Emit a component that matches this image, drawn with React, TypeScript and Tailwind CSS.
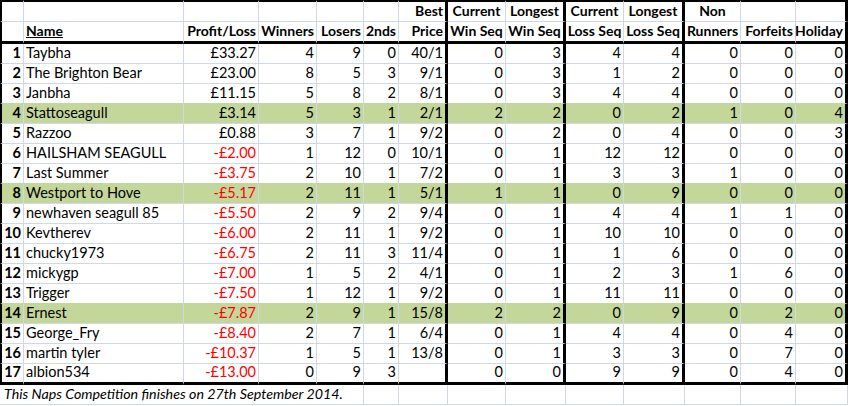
import React from 'react';

type Row = {
  name: string;
  pl: string;
  vals: (string | number)[];
  green?: boolean;
};

const rows: Row[] = [
  { name: 'Taybha', pl: '£33.27', vals: [4, 9, 0, '40/1', 0, 3, 4, 4, 0, 0, 0] },
  { name: 'The Brighton Bear', pl: '£23.00', vals: [8, 5, 3, '9/1', 0, 3, 1, 2, 0, 0, 0] },
  { name: 'Janbha', pl: '£11.15', vals: [5, 8, 2, '8/1', 0, 3, 4, 4, 0, 0, 0] },
  { name: 'Stattoseagull', pl: '£3.14', vals: [5, 3, 1, '2/1', 2, 2, 0, 2, 1, 0, 4], green: true },
  { name: 'Razzoo', pl: '£0.88', vals: [3, 7, 1, '9/2', 0, 2, 0, 4, 0, 0, 3] },
  { name: 'HAILSHAM SEAGULL', pl: '-£2.00', vals: [1, 12, 0, '10/1', 0, 1, 12, 12, 0, 0, 0] },
  { name: 'Last Summer', pl: '-£3.75', vals: [2, 10, 1, '7/2', 0, 1, 3, 3, 1, 0, 0] },
  { name: 'Westport to Hove', pl: '-£5.17', vals: [2, 11, 1, '5/1', 1, 1, 0, 9, 0, 0, 0], green: true },
  { name: 'newhaven seagull 85', pl: '-£5.50', vals: [2, 9, 2, '9/4', 0, 1, 4, 4, 1, 1, 0] },
  { name: 'Kevtherev', pl: '-£6.00', vals: [2, 11, 1, '9/2', 0, 1, 10, 10, 0, 0, 0] },
  { name: 'chucky1973', pl: '-£6.75', vals: [2, 11, 3, '11/4', 0, 1, 1, 6, 0, 0, 0] },
  { name: 'mickygp', pl: '-£7.00', vals: [1, 5, 2, '4/1', 0, 1, 2, 3, 1, 6, 0] },
  { name: 'Trigger', pl: '-£7.50', vals: [1, 12, 1, '9/2', 0, 1, 11, 11, 0, 0, 0] },
  { name: 'Ernest', pl: '-£7.87', vals: [2, 9, 1, '15/8', 2, 2, 0, 9, 0, 2, 0], green: true },
  { name: 'George_Fry', pl: '-£8.40', vals: [2, 7, 1, '6/4', 0, 1, 4, 4, 0, 4, 0] },
  { name: 'martin tyler', pl: '-£10.37', vals: [1, 5, 1, '13/8', 0, 1, 3, 3, 0, 7, 0] },
  { name: 'albion534', pl: '-£13.00', vals: [0, 9, 3, '', 0, 0, 9, 9, 0, 4, 0] },
];

// column index -> thick right border
const thick = [false, false, false, false, false, false, true, false, true, false, true, false, false, true];

type CellProps = {
  col: number;
  children?: React.ReactNode;
  align?: 'left' | 'right' | 'center';
  green?: boolean;
  greenBelow?: boolean;
  top?: boolean;
  heavyBottom?: boolean;
  bold?: boolean;
  red?: boolean;
};

function Cell({ col, children, align = 'right', green, greenBelow, top, heavyBottom, bold, red }: CellProps) {
  return (
    <div
      className={[
        'flex items-end overflow-visible whitespace-nowrap border-r border-b border-[#d0d7e5] pb-[1px] leading-[18px]',
        align === 'left' ? 'justify-start px-[2px]' : align === 'center' ? 'justify-center px-0' : 'justify-end px-[2px]',
        green ? 'bg-[#c4d79b] border-[#c4d79b]' : 'bg-white',
        greenBelow ? 'border-b-[#c4d79b]' : '',
        thick[col] ? 'border-r-[3px] border-r-black' : '',
        col === 0 ? 'border-l-2 border-l-black' : '',
        top ? 'border-t-2 border-t-black' : '',
        heavyBottom ? 'border-b-[3px] border-b-black' : '',
        bold ? 'font-bold' : '',
        red ? 'text-[#ff0000]' : 'text-black',
      ].join(' ')}
    >
      {children}
    </div>
  );
}

export default function App() {
  const head1 = ['', '', '', '', '', '', 'Best', 'Current', 'Longest', 'Current', 'Longest', 'Non', '', ''];
  const head2 = ['', 'Name', 'Profit/Loss', 'Winners', 'Losers', '2nds', 'Price', 'Win Seq', 'Win Seq', 'Loss Seq', 'Loss Seq', 'Runners', 'Forfeits', 'Holiday'];
  const centered = [7, 8, 9, 10, 11];

  return (
    <div className="min-h-screen bg-white font-['Lato','Open_Sans',sans-serif] text-[14.5px]">
      <div className="grid w-[848px] grid-cols-[24px_160px_75px_58px_47px_35px_49px_58px_60px_58px_61px_56px_55px_52px] grid-rows-[22px_22px_repeat(16,20px)_21px_20px]">
        {head1.map((h, i) => (
          <div key={'h1' + i} className="contents text-[14px]">
            <Cell col={i} top bold align={centered.includes(i) ? 'center' : 'right'}>
              {h}
            </Cell>
          </div>
        ))}
        {head2.map((h, i) => (
          <div key={'h2' + i} className="contents text-[14px]">
            <Cell col={i} heavyBottom bold align={i === 1 ? 'left' : centered.includes(i) ? 'center' : 'right'}>
              {i === 1 ? <span className="underline">{h}</span> : h}
            </Cell>
          </div>
        ))}
        {rows.map((r, ri) => {
          const last = ri === rows.length - 1;
          const below = !last && rows[ri + 1].green;
          const common = { green: r.green, greenBelow: below, heavyBottom: last };
          return (
            <React.Fragment key={r.name}>
              <Cell col={0} bold {...common}>{ri + 1}</Cell>
              <Cell col={1} align="left" {...common}>{r.name}</Cell>
              <Cell col={2} red={r.pl.startsWith('-')} {...common}>{r.pl}</Cell>
              {r.vals.map((v, vi) => (
                <Cell key={vi} col={vi + 3} {...common}>{v}</Cell>
              ))}
            </React.Fragment>
          );
        })}
        <div className="col-span-5 flex items-end whitespace-nowrap border-r border-b border-[#d0d7e5] pb-[1px] pl-[4px] text-[14.25px] leading-[18px] italic text-black">
          This Naps Competition finishes on 27th September 2014.
        </div>
        {[5, 6, 7, 8, 9, 10, 11, 12, 13].map((c) => (
          <div key={c} className="border-r border-b border-[#d0d7e5]" />
        ))}
      </div>
    </div>
  );
}
